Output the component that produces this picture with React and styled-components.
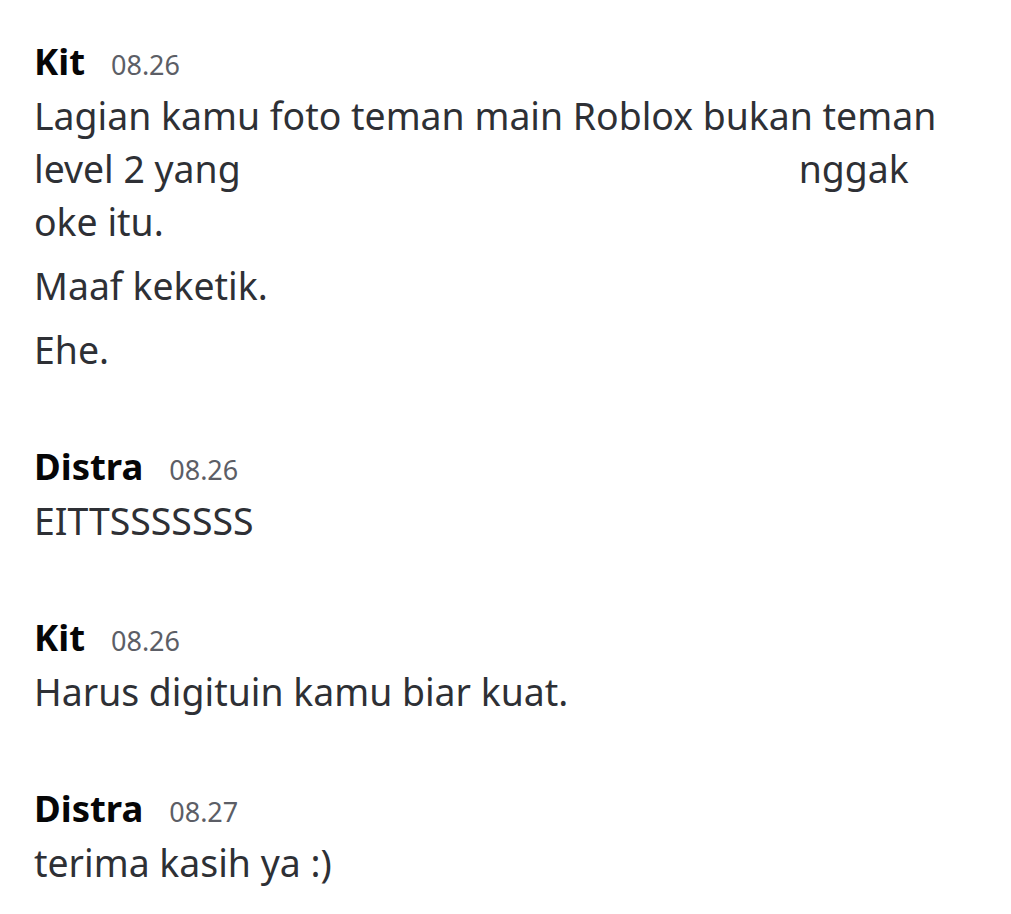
import React from 'react'
import styled, { createGlobalStyle } from 'styled-components'

// a line may be a string, or a list of parts where null marks an erased span
const messages = [
  {
    author: 'Kit',
    time: '08.26',
    lines: [
      [
        'Lagian kamu foto teman main Roblox bukan teman',
        ['level 2 yang', null, 'nggak'],
        'oke itu.',
      ],
      ['Maaf keketik.'],
      ['Ehe.'],
    ],
  },
  { author: 'Distra', time: '08.26', lines: [['EITTSSSSSSS']] },
  { author: 'Kit', time: '08.26', lines: [['Harus digituin kamu biar kuat.']] },
  { author: 'Distra', time: '08.27', lines: [['terima kasih ya :)']] },
]

function renderLine(line) {
  if (typeof line === 'string') return line
  return line.map((part, i) => (part === null ? <Redacted key={i} /> : part))
}

function App() {
  return (
    <>
      <GlobalStyle />
      <Chat>
        {messages.map((group, i) => (
          <Group key={i}>
            <Header>
              <Author>{group.author}</Author>
              <Time>{group.time}</Time>
            </Header>
            {group.lines.map((msg, j) => (
              <Message key={j}>
                {msg.map((line, k) => (
                  <Line key={k}>{renderLine(line)}</Line>
                ))}
              </Message>
            ))}
          </Group>
        ))}
      </Chat>
    </>
  )
}

const GlobalStyle = createGlobalStyle`
  body {
    margin: 0;
    background: #ffffff;
    font-family: 'Noto Sans', sans-serif;
  }
`

const Chat = styled.div`
  display: flex;
  flex-direction: column;
  gap: 64px;
  padding: 35px 0 0 34px;
`

const Group = styled.div`
  display: flex;
  flex-direction: column;
`

const Header = styled.div`
  display: flex;
  align-items: baseline;
  gap: 26px;
  height: 54px;
`

const Author = styled.span`
  font-size: 36.5px;
  font-weight: 700;
  color: #060607;
  line-height: 52px;
`

const Time = styled.span`
  font-size: 27px;
  color: #5c5e66;
`

const Message = styled.div`
  display: flex;
  flex-direction: column;
  & + & {
    margin-top: 11px;
  }
`

const Line = styled.div`
  font-size: 37.4px;
  line-height: 53px;
  color: #2e3035;
  white-space: nowrap;
`

const Redacted = styled.span`
  display: inline-block;
  width: 558px;
`

export default App
